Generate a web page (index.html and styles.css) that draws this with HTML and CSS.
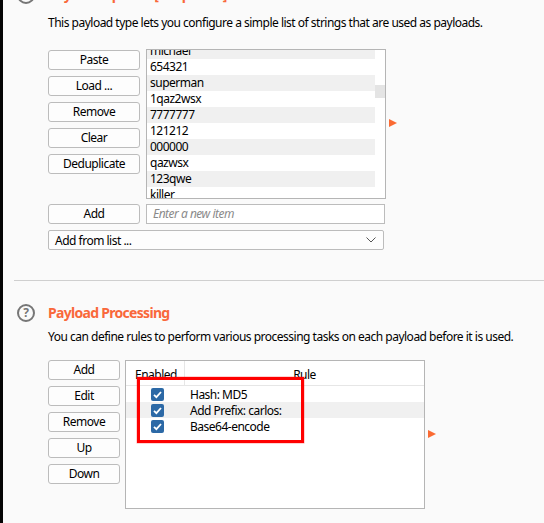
FILE: index.html
```html
<!DOCTYPE html>
<html>
<head>
<meta charset="utf-8">
<link rel="stylesheet" href="styles.css">
</head>
<body>
<div class="app">
  <div class="strip"></div>
  <div class="main">
    <section class="sec sec-top">
      <div class="sec-head"><span class="help">?</span><h2 class="title">Payload Options [Simple list]</h2></div>
      <div class="body">
        <p class="desc desc-top">This payload type lets you configure a simple list of strings that are used as payloads.</p>
        <div class="opts">
          <div class="btns">
            <div class="btn">Paste</div>
            <div class="btn">Load ...</div>
            <div class="btn">Remove</div>
            <div class="btn">Clear</div>
            <div class="btn">Deduplicate</div>
          </div>
          <div class="list">
            <div class="rows">
              <div class="row alt">michael</div>
              <div class="row">654321</div>
              <div class="row alt">superman</div>
              <div class="row">1qaz2wsx</div>
              <div class="row alt">7777777</div>
              <div class="row">121212</div>
              <div class="row alt">000000</div>
              <div class="row">qazwsx</div>
              <div class="row alt">123qwe</div>
              <div class="row">killer</div>
            </div>
            <div class="scroll"><div class="thumb"></div></div>
          </div>
          <span class="tri tri-top"></span>
        </div>
        <div class="addrow">
          <div class="btn">Add</div>
          <div class="input">Enter a new item</div>
        </div>
        <div class="select">
          <span>Add from list ...</span>
          <svg class="chev" width="10" height="6" viewBox="0 0 10 6"><path d="M0.5 0.5 L5 5 L9.5 0.5" fill="none" stroke="#555" stroke-width="1"/></svg>
        </div>
      </div>
    </section>
    <div class="sep"></div>
    <section class="sec sec-proc">
      <div class="sec-head"><span class="help">?</span><h2 class="title">Payload Processing</h2></div>
      <div class="body">
        <p class="desc desc-proc">You can define rules to perform various processing tasks on each payload before it is used.</p>
        <div class="proc">
          <div class="btns btns-proc">
            <div class="btn">Add</div>
            <div class="btn">Edit</div>
            <div class="btn">Remove</div>
            <div class="btn">Up</div>
            <div class="btn">Down</div>
          </div>
          <div class="table">
            <div class="thead">
              <div class="th th-en">Enabled</div>
              <div class="th th-rule">Rule</div>
            </div>
            <div class="trow">
              <div class="td-en"><span class="cb"><svg width="13" height="13" viewBox="0 0 13 13"><path d="M3 6.8 L5.4 9.2 L10 4" fill="none" stroke="#fff" stroke-width="1.8"/></svg></span></div>
              <div class="td-rule">Hash: MD5</div>
            </div>
            <div class="trow alt">
              <div class="td-en"><span class="cb"><svg width="13" height="13" viewBox="0 0 13 13"><path d="M3 6.8 L5.4 9.2 L10 4" fill="none" stroke="#fff" stroke-width="1.8"/></svg></span></div>
              <div class="td-rule">Add Prefix: carlos:</div>
            </div>
            <div class="trow">
              <div class="td-en"><span class="cb"><svg width="13" height="13" viewBox="0 0 13 13"><path d="M3 6.8 L5.4 9.2 L10 4" fill="none" stroke="#fff" stroke-width="1.8"/></svg></span></div>
              <div class="td-rule">Base64-encode</div>
            </div>
            <div class="mark"></div>
          </div>
          <span class="tri tri-proc"></span>
        </div>
      </div>
    </section>
  </div>
</div>
</body>
</html>
```

FILE: styles.css
```css
html, body {
  margin: 0;
  padding: 0;
  background: #fafafa;
}
body {
  font-family: "Noto Sans", "Open Sans", sans-serif;
  font-size: 12px;
  letter-spacing: -0.5px;
  color: #000;
}
.app {
  display: flex;
  width: 544px;
  height: 523px;
  overflow: hidden;
}
.strip {
  width: 3px;
  flex: none;
  background: #050505;
}
.main {
  flex: 1;
  padding-left: 11px;
}
.sec-top {
  margin-top: -14px;
}
.sec-head {
  display: flex;
  align-items: center;
  height: 18px;
}
.help {
  box-sizing: border-box;
  width: 18px;
  height: 18px;
  margin-left: 3px;
  border: 2px solid #767676;
  border-radius: 50%;
  color: #767676;
  font-size: 12px;
  font-weight: bold;
  letter-spacing: 0;
  display: flex;
  align-items: center;
  justify-content: center;
  line-height: 1;
}
.title {
  margin: 0 0 0 13px;
  font-size: 14px;
  font-weight: bold;
  letter-spacing: -0.7px;
  color: #f9683a;
  line-height: 16px;
}
.body {
  padding-left: 34px;
}
.desc {
  margin: 0;
  line-height: 16px;
}
.desc-top {
  margin-top: 11px;
}
.opts {
  display: flex;
  align-items: flex-start;
  margin-top: 18px;
}
.btns {
  display: flex;
  flex-direction: column;
  gap: 6px;
  width: 92px;
  margin-top: 1px;
}
.btn {
  box-sizing: border-box;
  height: 20px;
  border: 1px solid #bcbcbc;
  border-radius: 3px;
  background: #fdfdfd;
  display: flex;
  align-items: center;
  justify-content: center;
  line-height: 1;
}
.list {
  box-sizing: border-box;
  width: 240px;
  height: 150px;
  margin-left: 6px;
  border: 1px solid #b5b5b5;
  background: #fff;
  overflow: hidden;
  display: flex;
}
.rows {
  flex: 1;
  margin-top: -7px;
}
.row {
  height: 16px;
  line-height: 16px;
  padding-left: 3px;
}
.alt {
  background: #f0f0f0;
}
.scroll {
  width: 10px;
  flex: none;
}
.thumb {
  margin-top: 35px;
  height: 13px;
  background: #e4e4e4;
}
.tri {
  width: 0;
  height: 0;
  border-top: 4.5px solid transparent;
  border-bottom: 4.5px solid transparent;
  border-left: 8px solid #fa6a32;
  margin-left: 3px;
  flex: none;
}
.tri-top {
  margin-top: 70px;
}
.addrow {
  display: flex;
  gap: 6px;
  margin-top: 5px;
}
.addrow .btn {
  width: 92px;
}
.input {
  box-sizing: border-box;
  width: 239px;
  height: 20px;
  border: 1px solid #bcbcbc;
  background: #fff;
  padding-left: 6px;
  line-height: 18px;
  font-style: italic;
  color: #8a8a8a;
}
.select {
  box-sizing: border-box;
  width: 336px;
  height: 20px;
  margin-top: 6px;
  border: 1px solid #bcbcbc;
  border-radius: 2px;
  background: #fdfdfd;
  display: flex;
  align-items: center;
  justify-content: space-between;
  padding: 0 7px 0 6px;
}
.sep {
  height: 1px;
  background: #cfcfcf;
  margin-top: 30px;
}
.sec-proc {
  margin-top: 23px;
}
.desc-proc {
  margin-top: 7px;
}
.proc {
  display: flex;
  align-items: flex-start;
  margin-top: 15px;
}
.btns-proc {
  width: 72px;
  margin-top: 0;
}
.table {
  position: relative;
  box-sizing: border-box;
  width: 300px;
  height: 149px;
  margin-left: 5px;
  border: 1px solid #b5b5b5;
  background: #fff;
}
.thead {
  display: flex;
  height: 24px;
  border-bottom: 1px solid #e6e6e6;
}
.th {
  line-height: 28px;
}
.th-en {
  width: 59px;
  padding-left: 9px;
  box-sizing: border-box;
  border-right: 1px solid #e6e6e6;
}
.th-rule {
  flex: 1;
  text-align: center;
}
.trow {
  display: flex;
  height: 16px;
  align-items: center;
}
.td-en {
  width: 60px;
  display: flex;
  justify-content: center;
  padding-left: 2px;
  box-sizing: border-box;
}
.cb {
  width: 13px;
  height: 13px;
  border-radius: 2px;
  background: #2c69a6;
  display: block;
}
.cb svg {
  display: block;
}
.td-rule {
  padding-left: 4px;
}
.mark {
  position: absolute;
  left: 11px;
  top: 16px;
  width: 167px;
  height: 66px;
  box-sizing: border-box;
  border: 3px solid #ff0000;
  box-shadow: 0 0 0 0.5px rgba(255, 0, 0, 0.35);
}
.tri-proc {
  margin-top: 70px;
}
```
